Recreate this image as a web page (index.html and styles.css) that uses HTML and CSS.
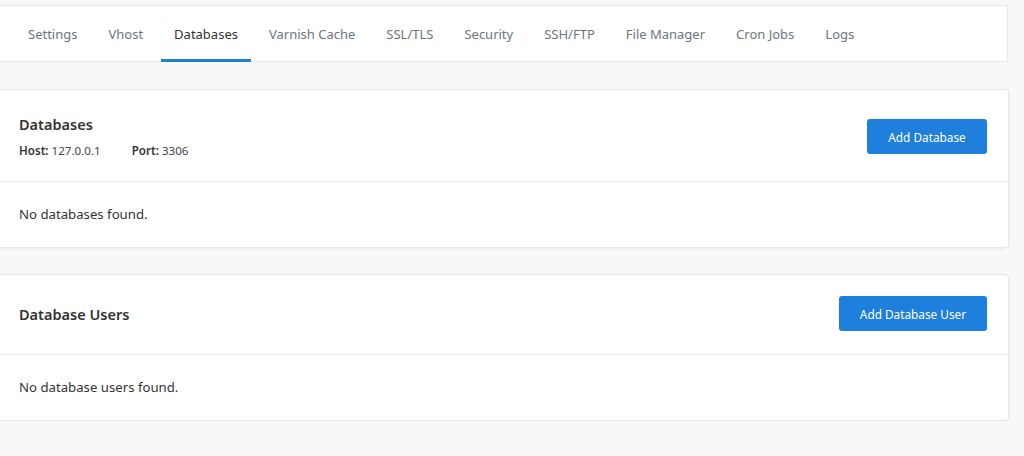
FILE: index.html
```html
<!DOCTYPE html>
<html>
<head>
<meta charset="utf-8">
<link rel="stylesheet" href="styles.css">
</head>
<body>
<div class="page">
  <nav class="tabs">
    <a class="tab">Settings</a>
    <a class="tab">Vhost</a>
    <a class="tab active">Databases</a>
    <a class="tab">Varnish Cache</a>
    <a class="tab">SSL/TLS</a>
    <a class="tab">Security</a>
    <a class="tab">SSH/FTP</a>
    <a class="tab">File Manager</a>
    <a class="tab">Cron Jobs</a>
    <a class="tab">Logs</a>
  </nav>

  <section class="card">
    <div class="card-header">
      <div class="head-text">
        <h2 class="card-title">Databases</h2>
        <div class="meta">
          <span><b>Host:</b> 127.0.0.1</span>
          <span><b>Port:</b> 3306</span>
        </div>
      </div>
      <button class="btn btn-db">Add Database</button>
    </div>
    <div class="card-body">No databases found.</div>
  </section>

  <section class="card">
    <div class="card-header header-users">
      <h2 class="card-title">Database Users</h2>
      <button class="btn btn-user">Add Database User</button>
    </div>
    <div class="card-body">No database users found.</div>
  </section>
</div>
</body>
</html>
```

FILE: styles.css
```css
html, body {
  margin: 0;
  padding: 0;
  background: #f7f8fa;
  font-family: "Segoe UI", "Noto Sans", "Open Sans", sans-serif;
  color: #333;
}

.page {
  width: 1009px;
  padding-top: 5px;
  display: flex;
  flex-direction: column;
  gap: 26px;
}

.tabs {
  width: 1008px;
  height: 57px;
  box-sizing: border-box;
  background: #fff;
  border: 1px solid #e6e8eb;
  border-left: none;
  display: flex;
  align-items: stretch;
  padding-left: 15px;
  gap: 5px;
  margin-bottom: 1px;
}

.tab {
  display: flex;
  align-items: center;
  padding: 0 13px;
  font-size: 13px;
  color: #6c757d;
  border-bottom: 3px solid transparent;
  margin-bottom: -1px;
  padding-top: 2px;
  white-space: nowrap;
}

.tab.active {
  color: #333;
  border-bottom-color: #1f80cc;
}

.card {
  background: #fff;
  border: 1px solid #e6e8eb;
  border-left: none;
  border-radius: 0 4px 4px 0;
  box-shadow: 0 1px 3px rgba(0, 0, 0, 0.06);
}

.card-header {
  display: flex;
  align-items: center;
  justify-content: space-between;
  padding: 23px 21px 21px 19px;
  border-bottom: 1px solid #e6e8eb;
}

.header-users {
  padding-top: 21px;
  padding-bottom: 23px;
}

.card-title {
  margin: 0;
  font-size: 14.5px;
  font-weight: 600;
  line-height: 22px;
  color: #333;
}

.meta {
  margin-top: 7px;
  display: flex;
  gap: 31px;
  font-size: 11.6px;
  line-height: 18px;
  color: #444;
}

.meta b {
  font-weight: 600;
  color: #333;
}

.btn {
  height: 35px;
  border: none;
  border-radius: 3px;
  background: #1f7fdc;
  color: #fff;
  font-family: inherit;
  font-size: 11.8px;
  padding: 0;
  cursor: pointer;
}

.btn-db {
  width: 120px;
}

.btn-user {
  width: 148px;
}

.card-body {
  padding: 23px 19px 24px;
  font-size: 13.2px;
  line-height: 18px;
  color: #333;
}
```
